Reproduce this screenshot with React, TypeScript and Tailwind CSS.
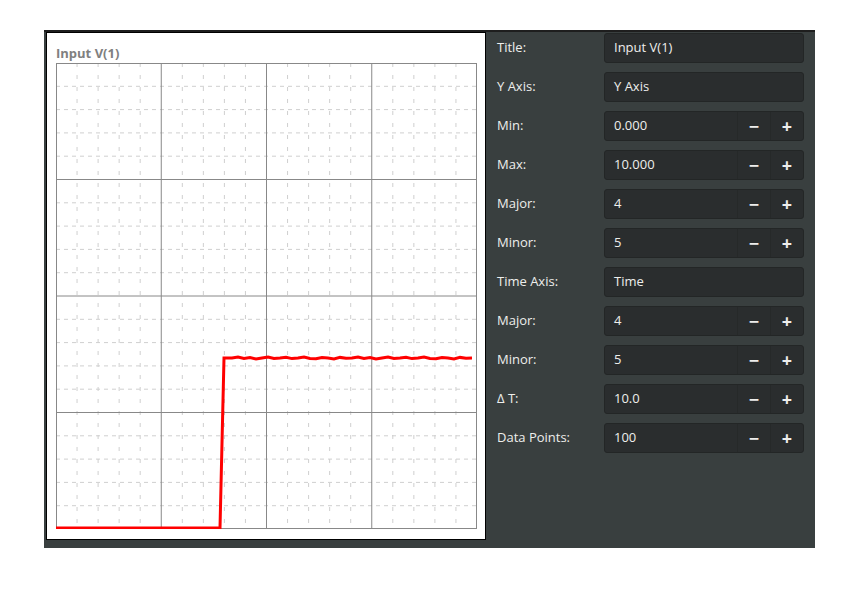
import React from "react";

const W = 421, H = 466;

function Chart() {
  const minors: JSX.Element[] = [];
  for (let i = 1; i < 20; i++) {
    if (i % 5 === 0) continue;
    const x = (W * i) / 20;
    minors.push(<line key={"vx" + i} x1={x} y1={0} x2={x} y2={H} stroke="#cfcfcf" strokeDasharray="4 8" />);
    const y = (H * i) / 20;
    minors.push(<line key={"hy" + i} x1={0} y1={y} x2={W} y2={y} stroke="#cfcfcf" strokeDasharray="4 4" />);
  }
  const majors: JSX.Element[] = [];
  for (let i = 1; i < 4; i++) {
    majors.push(<line key={"mx" + i} x1={(W * i) / 4} y1={0} x2={(W * i) / 4} y2={H} stroke="#888" />);
    majors.push(<line key={"my" + i} x1={0} y1={(H * i) / 4} x2={W} y2={(H * i) / 4} stroke="#888" />);
  }
  const pts: string[] = [`0,${H - 1}`, `164,${H - 1}`, `168,295`];
  const noise = [0, -1, 0.5, -0.5, 1, 0, -1, 0.5, 0, -0.8, 0.6, 0, -1, 0.4, 0.8, -0.4, 0, 1, -0.6, 0.3];
  let k = 0;
  for (let x = 176; x <= W; x += 6) {
    pts.push(`${x},${295 + noise[k++ % noise.length]}`);
  }
  return (
    <svg width={W} height={H} className="block">
      {minors}
      {majors}
      <rect x={0.5} y={0.5} width={W - 1} height={H - 1} fill="none" stroke="#888" />
      <polyline points={pts.join(" ")} fill="none" stroke="#ff0000" strokeWidth={3} />
    </svg>
  );
}

const rows: { label: string; value: string; spin: boolean }[] = [
  { label: "Title:", value: "Input V(1)", spin: false },
  { label: "Y Axis:", value: "Y Axis", spin: false },
  { label: "Min:", value: "0.000", spin: true },
  { label: "Max:", value: "10.000", spin: true },
  { label: "Major:", value: "4", spin: true },
  { label: "Minor:", value: "5", spin: true },
  { label: "Time Axis:", value: "Time", spin: false },
  { label: "Major:", value: "4", spin: true },
  { label: "Minor:", value: "5", spin: true },
  { label: "Δ T:", value: "10.0", spin: true },
  { label: "Data Points:", value: "100", spin: true },
];

export default function App() {
  return (
    <div className="w-[862px] h-[599px] bg-white" style={{ fontFamily: "'Open Sans', 'Noto Sans', sans-serif" }}>
      <div className="pt-[30px] pl-[44px]">
        <div className="w-[771px] h-[518px] bg-[#393f3f] border-t-2 border-[#1e1e1e] flex">
          <div className="ml-[2px] w-[440px] h-[508px] bg-white border border-black pl-[9px] pt-[12px]">
            <div className="text-[13px] font-bold text-[#808080] leading-[16px] h-[18px]">Input V(1)</div>
            <Chart />
          </div>
          <div className="pl-[11px] pt-[1px] flex flex-col gap-[9px]">
            {rows.map((r, i) => (
              <div key={i} className="flex items-center h-[30px]">
                <div className="w-[107px] text-[13px] text-[#eeeeec]">{r.label}</div>
                <div className="w-[200px] h-[30px] bg-[#2a2d2e] rounded-[3px] border border-[#232626] flex items-center">
                  <div className="flex-1 pl-[9px] text-[13px] text-[#eeeeec]">{r.value}</div>
                  {r.spin && (
                    <>
                      <div className="w-[33px] h-full flex items-center justify-center text-[#eeeeec] text-[18px] font-bold border-l border-[#262929]">−</div>
                      <div className="w-[33px] h-full flex items-center justify-center text-[#eeeeec] text-[18px] font-bold border-l border-[#262929]">+</div>
                    </>
                  )}
                </div>
              </div>
            ))}
          </div>
        </div>
      </div>
    </div>
  );
}
